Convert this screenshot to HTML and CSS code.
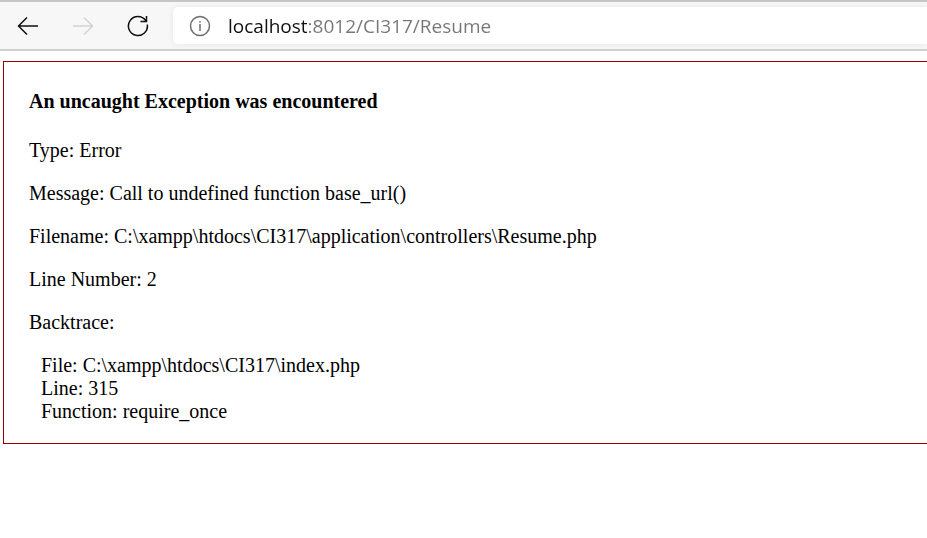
FILE: index.html
```html
<!DOCTYPE html>
<html lang="en">
<head>
    <meta charset="utf-8">
    <meta name="viewport" content="width=device-width, initial-scale=1.0">
    <title>Error</title>
    <link rel="stylesheet" href="styles.css">
</head>

<body>
    <div class="toolbar">
        <button class="nav-button" type="button" aria-label="Back">
            <svg width="22" height="20" viewBox="0 0 22 20">
                <path d="M10 1.5 L1.5 10 L10 18.5 M1.5 10 H21" />
            </svg>
        </button>
        <button class="nav-button" type="button" aria-label="Forward" disabled>
            <svg width="22" height="20" viewBox="0 0 22 20">
                <path d="M12 1.5 L20.5 10 L12 18.5 M20.5 10 H1" />
            </svg>
        </button>
        <button class="nav-button" type="button" aria-label="Refresh">
            <svg width="22" height="22" viewBox="0 0 22 22">
                <path d="M20.3 9.5 A9.5 9.5 0 1 1 18.8 5.7 M19.5 1 V6.5 H13.5" />
            </svg>
        </button>
        <div class="address-bar">
            <button class="info-button" type="button" aria-label="View site information">
                <svg width="22" height="22" viewBox="0 0 22 22">
                    <circle cx="11" cy="11" r="9.5" />
                    <path d="M11 9 V16 M11 6 V7.5" />
                </svg>
            </button>
            <input class="address" type="text" aria-label="Address" value="localhost:8012/CI317/Resume">
        </div>
    </div>

    <div class="error">
        <h4>An uncaught Exception was encountered</h4>

        <p>Type: Error</p>
        <p>Message: Call to undefined function base_url()</p>
        <p>Filename: C:\xampp\htdocs\CI317\application\controllers\Resume.php</p>
        <p>Line Number: 2</p>

        <p>Backtrace:</p>
        <p class="trace">
            File: C:\xampp\htdocs\CI317\index.php<br>
            Line: 315<br>
            Function: require_once
        </p>
    </div>
</body>
</html>
```

FILE: styles.css
```css
* {
    box-sizing: border-box;
}

body {
    margin: 0;
    background-color: #ffffff;
    color: #000000;
    font-family: "Liberation Serif", "Times New Roman", serif;
    font-size: 20px;
    line-height: 23px;
}

/* browser toolbar */
.toolbar {
    display: flex;
    align-items: center;
    padding: 5px 0;
    background-color: #f7f7f7;
    border-top: 2px solid #c6c6c6;
    border-bottom: 2px solid #d0d0d0;
}

.nav-button {
    display: flex;
    justify-content: center;
    width: 55px;
    padding: 0;
    border: 0;
    background: none;
    color: #101010;
}

    .nav-button:disabled {
        color: #d4d4d4;
    }

svg {
    fill: none;
    stroke: currentColor;
    stroke-width: 1.5;
}

.address-bar {
    display: flex;
    flex: 1;
    align-items: center;
    height: 37px;
    margin-left: 8px;
    padding-left: 16px;
    background-color: #ffffff;
    border-radius: 5px 0 0 5px;
    box-shadow: 0 0 6px rgba(0,0,0,0.08);
}

.info-button {
    display: flex;
    padding: 0;
    border: 0;
    background: none;
    color: #6e6e6e;
}

/* host is dark, the rest of the address is grey */
.address {
    flex: 1;
    min-width: 0;
    margin-left: 17px;
    padding: 0;
    border: 0;
    outline: none;
    background: linear-gradient(to right, #101010 80px, #767676 80px);
    -webkit-background-clip: text;
    background-clip: text;
    color: transparent;
    caret-color: #101010;
    font-family: "Open Sans", "Segoe UI", sans-serif;
    font-size: 19px;
}

/* error box */
.error {
    margin: 10px 0 10px 3px;
    padding-left: 25px;
    border: 1px solid #990000;
    border-right: 0;
}

    .error h4 {
        margin: 28px 0 26px;
        font-size: 20px;
    }

    .error p {
        margin: 20px 0;
    }

    .error .trace {
        margin-left: 12px;
    }
```
